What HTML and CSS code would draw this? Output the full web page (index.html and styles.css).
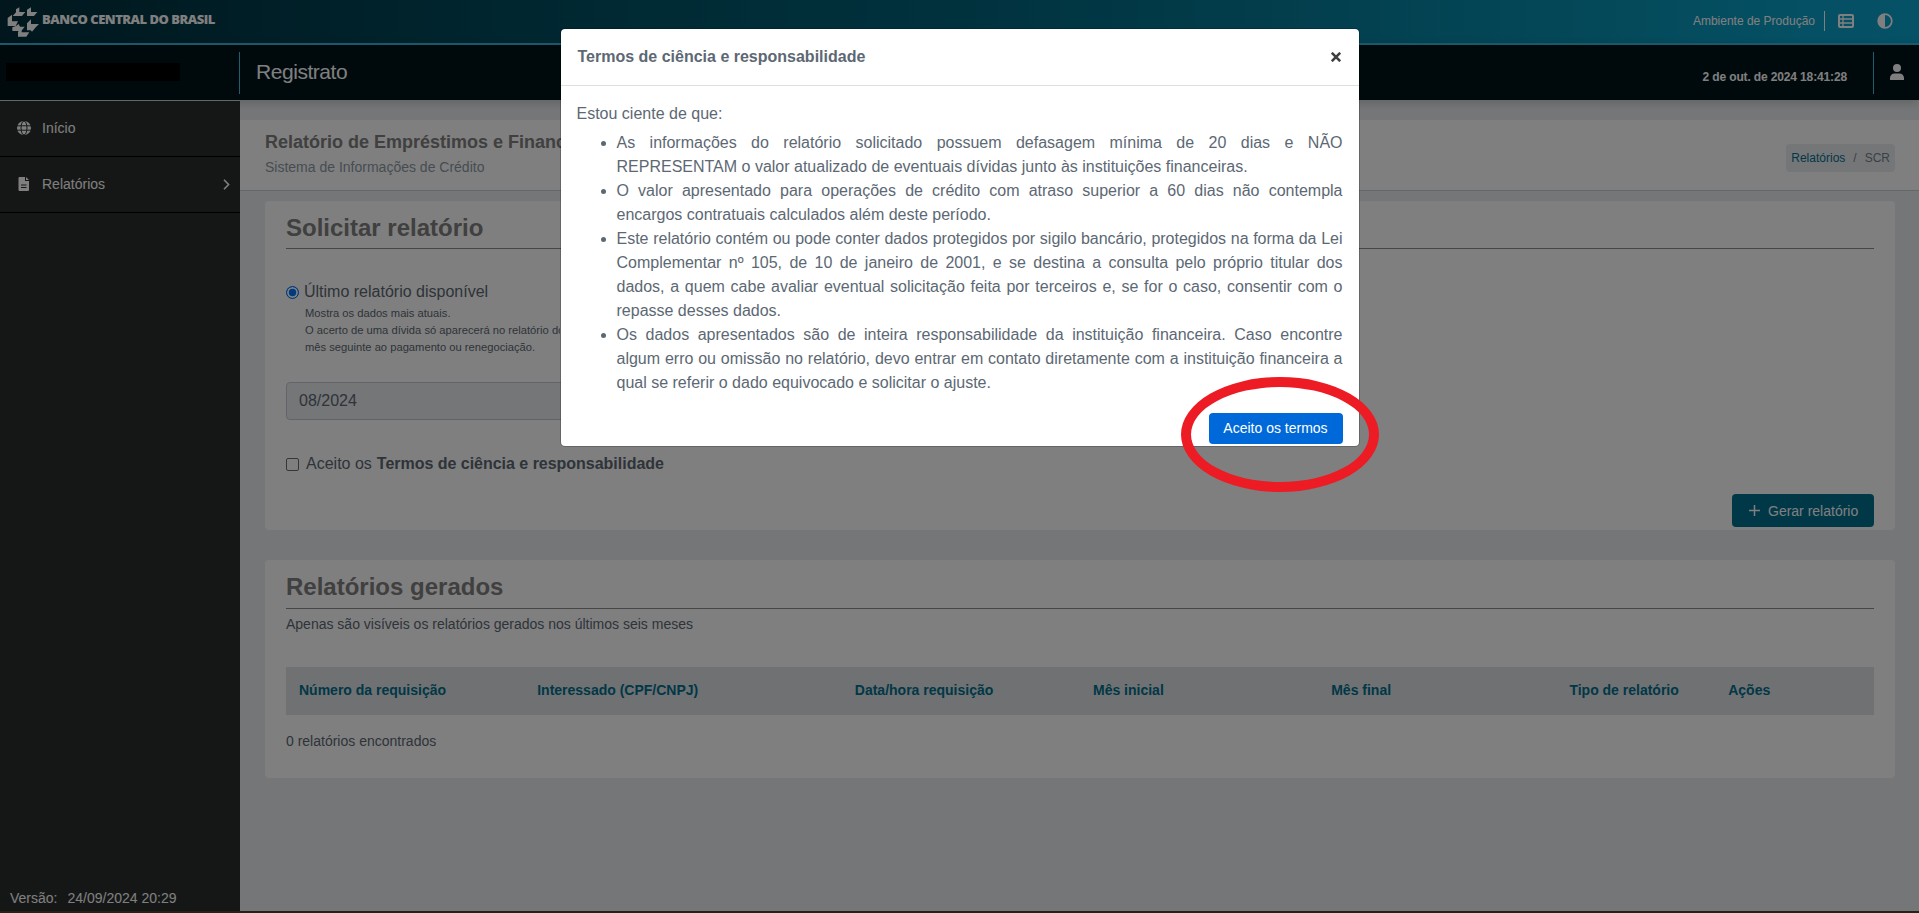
FILE: index.html
```html
<!DOCTYPE html>
<html lang="pt-BR">
<head>
<meta charset="utf-8">
<title>Registrato</title>
<link rel="stylesheet" href="styles.css">
</head>
<body>
<div class="app">
  <header class="brandbar">
    <svg class="logo" width="32" height="32" viewBox="21 21 96 96" fill="#fff">
      <path d="M58 22v14h18L66 48H38l10-11v-9zM93 22v14h19l-10 12H81V29zM36 44v20h18l-7 14H23V54zM48 78l8-6 4 8h14L64 93H37V82zM93 58v14h24l-9 9-12 14-4-4H81V70zM65 85v12h23l-9 13H54V95z"/>
    </svg>
    <span class="brandname">BANCO CENTRAL DO BRASIL</span>
    <span class="env">Ambiente de Produção</span>
    <svg class="ic-list" width="16" height="14" viewBox="0 0 16 14" fill="none" stroke="#fff"><rect x="1" y="1" width="14" height="12" rx="1" stroke-width="2"/><path d="M5 1v12M1 5h14M1 9h14" stroke-width="1.300"/></svg>
    <svg class="ic-contrast" width="16" height="16" viewBox="0 0 16 16"><circle cx="8" cy="8" r="6.800" fill="none" stroke="#fff" stroke-width="1.700"/><path d="M8 1a7 7 0 0 0 0 14z" fill="#fff"/></svg>
  </header>
  <div class="appbar">
    <div class="userbox"><span class="mask"></span></div>
    <div class="appname">Registrato</div>
    <div class="clock">2 de out. de 2024 18:41:28</div>
    <div class="account"><svg width="14" height="16" viewBox="0 0 14 16" fill="#fff"><circle cx="7" cy="4" r="4"/><path d="M0 16v-2a4.500 4.500 0 0 1 4.500-4.500h5A4.500 4.500 0 0 1 14 14v2z"/></svg></div>
  </div>
  <div class="body">
    <nav class="sidebar">
      <a class="item"><svg width="14" height="14" viewBox="0 0 14 14"><circle cx="7" cy="7" r="7" fill="#fff"/><g fill="none" stroke="#2b2e2d"><path d="M0 4.800h14M0 9.200h14"/><ellipse cx="7" cy="7" rx="3" ry="7"/></g></svg><span>Início</span></a>
      <a class="item"><svg width="14" height="14" viewBox="0 0 14 14"><path d="M2.500 0H8v4h4v9a1 1 0 0 1-1 1H2.500a1 1 0 0 1-1-1V1a1 1 0 0 1 1-1zM9 0l3 3H9z" fill="#fff"/><path d="M4 8h5.500M4 10.500h5.500" stroke="#2b2e2d" stroke-width="1.200"/></svg><span>Relatórios</span><svg class="chev" width="7" height="11" viewBox="0 0 7 11" fill="none" stroke="#fff" stroke-width="1.600"><path d="M1 .7 5.600 5.500 1 10.300"/></svg></a>
      <div class="version"><span>Versão:</span><span>24/09/2024 20:29</span></div>
    </nav>
    <main class="main">
      <div class="pagehead">
        <div class="titles">
          <h1>Relatório de Empréstimos e Financ</h1>
          <p>Sistema de Informações de Crédito</p>
        </div>
        <div class="crumbs"><a>Relatórios</a><span>/</span><span>SCR</span></div>
      </div>
      <section class="card request">
        <h2>Solicitar relatório</h2>
        <label class="radio"><i></i><span>Último relatório disponível</span></label>
        <p class="help">Mostra os dados mais atuais.<br>O acerto de uma dívida só aparecerá no relatório do<br>mês seguinte ao pagamento ou renegociação.</p>
        <div class="field">08/2024</div>
        <label class="check"><i></i><span>Aceito os</span><b>Termos de ciência e responsabilidade</b></label>
        <button class="generate"><svg width="11" height="11" viewBox="0 0 11 11" stroke="#fff" stroke-width="1.500"><path d="M5.500 0v11M0 5.500h11"/></svg>Gerar relatório</button>
      </section>
      <section class="card reports">
        <h2>Relatórios gerados</h2>
        <p class="note">Apenas são visíveis os relatórios gerados nos últimos seis meses</p>
        <div class="thead"><span>Número da requisição</span><span>Interessado (CPF/CNPJ)</span><span>Data/hora requisição</span><span>Mês inicial</span><span>Mês final</span><span>Tipo de relatório</span><span>Ações</span></div>
        <p class="count">0 relatórios encontrados</p>
      </section>
    </main>
  </div>
  <div class="bottomline"></div>
</div>
<div class="backdrop">
  <div class="modal">
    <div class="modalhead"><span>Termos de ciência e responsabilidade</span><svg width="10" height="10" viewBox="0 0 10 10" stroke="#404040" stroke-width="2.600"><path d="M.8.8l8.400 8.400M9.200.8.800 9.200"/></svg></div>
    <div class="modalbody">
      <p>Estou ciente de que:</p>
      <ul>
        <li>As informações do relatório solicitado possuem defasagem mínima de 20 dias e NÃO REPRESENTAM o valor atualizado de eventuais dívidas junto às instituições financeiras.</li>
        <li>O valor apresentado para operações de crédito com atraso superior a 60 dias não contempla encargos contratuais calculados além deste período.</li>
        <li>Este relatório contém ou pode conter dados protegidos por sigilo bancário, protegidos na forma da Lei Complementar nº 105, de 10 de janeiro de 2001, e se destina a consulta pelo próprio titular dos dados, a quem cabe avaliar eventual solicitação feita por terceiros e, se for o caso, consentir com o repasse desses dados.</li>
        <li>Os dados apresentados são de inteira responsabilidade da instituição financeira. Caso encontre algum erro ou omissão no relatório, devo entrar em contato diretamente com a instituição financeira a qual se referir o dado equivocado e solicitar o ajuste.</li>
      </ul>
      <button class="accept">Aceito os termos</button>
    </div>
  </div>
</div>
<div class="highlight"></div>
</body>
</html>
```
FILE: styles.css
```css
* { box-sizing: border-box; }
body { margin: 0; font-family: "Liberation Sans", Arial, sans-serif; font-size: 14px; color: #5c6873; overflow: hidden; }
h1, h2, p, ul { margin: 0; }
button { border: 0; font-family: inherit; color: #fff; border-radius: 4px; }
svg { display: block; flex: none; }

.app { height: 913px; display: flex; flex-direction: column; background: #ebedf0; }
.brandbar { height: 45px; flex: none; display: flex; align-items: center; padding: 0 27px 2px 7px; color: #fff; border-bottom: 2px solid #3ebbe0; background: linear-gradient(90deg, #022e3a 0%, #013f50 15%, #015569 34%, #01647c 50%, #07819f 70%, #0892b3 83%, #0aa0c8 94%, #0aa2cd 100%); }
.logo { width: 32px; height: 32px; margin: 4px 3px 0 0; }
.brandname { font: 800 13px "Open Sans", sans-serif; letter-spacing: -0.500px; margin-top: -3px; white-space: nowrap; }
.env { margin-left: auto; font-size: 12px; line-height: 20px; padding-right: 9px; border-right: 1px solid #fff; }
.ic-list { margin-left: 13px; }
.ic-contrast { margin: 0 -1px 0 23px; }

.appbar { height: 55px; flex: none; display: flex; align-items: center; background: #001218; color: #fff; box-shadow: 0 2px 10px rgba(0,0,0,.2); position: relative; z-index: 1; }
.userbox { width: 240px; height: 42px; padding: 11px 0 0 6px; border-right: 1px solid #3ebbe0; }
.mask { display: block; width: 174px; height: 18px; background: #000; }
.appname { font-size: 21px; padding: 0 0 2px 16px; letter-spacing: -.450px; }
.clock { margin-left: auto; font-size: 12px; font-weight: 700; letter-spacing: -.14px; padding: 8px 26px 0 0; }
.account { height: 42px; width: 46px; border-left: 1px solid #3ebbe0; padding: 12px 0 0 16px; }

.body { display: flex; flex: 1; min-height: 0; }
.sidebar { width: 240px; display: flex; flex-direction: column; background: #2b2e2d; color: #fff; border-top: 1px solid #c8ced3; z-index: 2; }
.item { display: flex; align-items: center; height: 56px; border-bottom: 1px solid #000; padding: 0 10px 1px 17px; gap: 11px; }
.chev { margin-left: auto; }
.version { margin-top: auto; display: flex; gap: 10px; padding: 0 0 5px 10px; }
.main { flex: 1; min-width: 0; display: flex; flex-direction: column; padding-top: 20px; }

.pagehead { height: 71px; display: flex; justify-content: space-between; padding: 0 24px 0 25px; background: #fff; border-bottom: 1px solid #c8ced3; }
.titles { width: 296px; overflow: hidden; }
.pagehead h1 { font-size: 18px; line-height: 22px; padding-top: 11px; color: #808080; white-space: nowrap; overflow: hidden; }
.pagehead p { line-height: 20px; padding-top: 4px; color: #8d9aa5; }
.crumbs { display: flex; gap: 8px; margin-top: 24px; height: 28px; align-items: center; padding: 0 5px; border-radius: 4px; background: #ebedf0; font-size: 12px; color: #73818f; }
.crumbs a { color: #00708f; }

.card { margin: 10px 24px 0 25px; padding: 0 21px; border-radius: 4px; background: #fff; display: flex; flex-direction: column; }
.card h2 { font-size: 24px; line-height: 30px; color: #808080; border-bottom: 1px solid #8c8c8c; }
.request { height: 329px; }
.request h2 { padding: 12px 0 5px; }
.radio, .check { display: flex; align-items: center; font-size: 16px; line-height: 24px; }
.radio { margin-top: 31px; }
.radio i { width: 13px; height: 13px; border-radius: 50%; border: 1.500px solid #0075ff; background: #0075ff; box-shadow: inset 0 0 0 1.800px #fff; margin-right: 5px; }
.help { font-size: 11.200px; line-height: 17px; padding: 1px 0 0 19px; white-space: nowrap; width: 274px; overflow: hidden; }
.field { margin-top: 26px; width: 508px; height: 38px; border: 1px solid #c4c9d0; border-radius: 4px; background: #e9ecef; font-size: 16px; line-height: 36px; padding-left: 12px; }
.check { margin-top: 32px; white-space: pre; }
.check i { width: 13px; height: 13px; border: 1px solid #6c6c6c; border-radius: 2px; margin-right: 7px; background: #fff; }
.check b { margin-left: 5px; letter-spacing: -.02px; }
.generate { align-self: flex-end; display: flex; align-items: center; gap: 8px; margin-top: 18px; width: 142px; height: 33px; flex: none; padding: 0 0 0 17px; background: #007091; font-size: 14px; }
.reports { margin-top: 30px; height: 218px; }
.reports h2 { padding: 12px 0 6px; }
.note { line-height: 20px; padding-top: 5px; }
.thead { display: grid; grid-template-columns: 15fr 20fr 15fr 15fr 15fr 10fr 10fr; margin-top: 33px; height: 48px; line-height: 47px; background: #e1e3e5; color: #00708f; font-weight: 700; }
.thead span { padding-left: 13px; white-space: nowrap; }
.count { padding-top: 16px; line-height: 20px; }
.bottomline { height: 2px; flex: none; background: #4a452e; }

.backdrop { position: absolute; inset: 0; z-index: 5; background: rgba(0,0,0,.5); display: flex; justify-content: center; align-items: flex-start; padding: 28px 0 0 0; }
.modal { width: 800px; height: 419px; border: 1px solid rgba(0,0,0,.2); border-radius: 5px; background: #fff; background-clip: padding-box; }
.modalhead { display: flex; align-items: center; justify-content: space-between; height: 57px; padding: 0 18px 0 17px; border-bottom: 1px solid #dcdfe2; font-size: 16px; font-weight: 700; color: #5c6873; }
.modalbody { padding: 16px; font-size: 16px; line-height: 24px; color: #5c6873; display: flex; flex-direction: column; }
.modalbody ul { margin-top: 5px; padding-left: 40px; text-align: justify; }
.accept { align-self: flex-end; margin-top: 18px; width: 134px; height: 31px; flex: none; padding: 0 0 1px; background: #0069d9; font-size: 14px; }
.highlight { position: absolute; z-index: 6; left: 1181px; top: 377px; width: 198px; height: 115px; border: 10px solid #ed1c24; border-radius: 50%; }
```
